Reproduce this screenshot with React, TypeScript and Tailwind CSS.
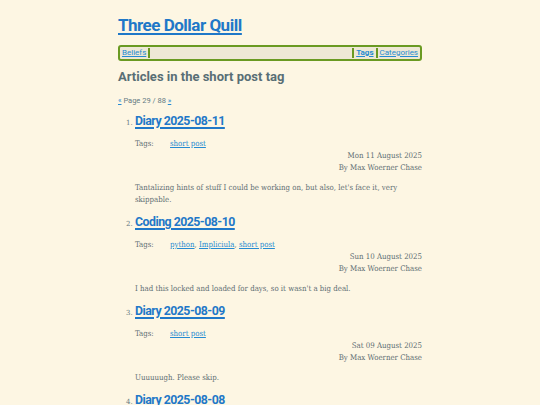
import React from 'react';

const heading = { fontFamily: '"Liberation Sans Narrow", "Roboto", sans-serif' };
const body = { fontFamily: '"DejaVu Serif", "Liberation Serif", serif' };

const posts = [
  {
    title: 'Diary 2025-08-11',
    tags: ['short post'],
    date: 'Mon 11 August 2025',
    summary: "Tantalizing hints of stuff I could be working on, but also, let's face it, very skippable.",
  },
  {
    title: 'Coding 2025-08-10',
    tags: ['python', 'Impliciula', 'short post'],
    date: 'Sun 10 August 2025',
    summary: "I had this locked and loaded for days, so it wasn't a big deal.",
  },
  {
    title: 'Diary 2025-08-09',
    tags: ['short post'],
    date: 'Sat 09 August 2025',
    summary: 'Uuuuuugh. Please skip.',
  },
  {
    title: 'Diary 2025-08-08',
    tags: ['short post'],
    date: 'Fri 08 August 2025',
    summary: 'Another one.',
  },
];

function Sep() {
  return <span className="inline-block w-[2px] h-[10px] bg-[#6a9a22] mx-[2px]" />;
}

export default function App() {
  return (
    <div className="min-h-screen bg-[#fdf6e3] text-[#5f6f73]" style={body}>
      <div className="w-[304px] mx-auto pt-[14px]">
        <h1 style={heading} className="text-[17px] leading-[22px] font-bold tracking-[-0.5px] text-[#1f78c8] underline decoration-[1.5px] underline-offset-2">
          <a href="#">Three Dollar Quill</a>
        </h1>

        {/* nav bar */}
        <nav
          style={heading}
          className="mt-[9px] h-[16px] flex items-center justify-between rounded-[3px] border-2 border-[#6a9a22] bg-[#eee8d5] px-[2px] text-[8px] leading-none"
        >
          <div className="flex items-center">
            <a href="#" className="text-[#268bd2] underline">Beliefs</a>
            <Sep />
          </div>
          <div className="flex items-center">
            <Sep />
            <a href="#" className="text-[#268bd2] font-bold underline">Tags</a>
            <Sep />
            <a href="#" className="text-[#268bd2] underline">Categories</a>
          </div>
        </nav>

        <h2 style={heading} className="mt-[8px] text-[13px] leading-[16px] font-bold text-[#586e75]">
          Articles in the short post tag
        </h2>

        <p style={heading} className="mt-[11px] text-[7.5px] leading-[10px] text-[#657b83]">
          <a href="#" className="text-[#268bd2] underline">«</a> Page 29 / 88{' '}
          <a href="#" className="text-[#268bd2] underline">»</a>
        </p>

        <ol className="mt-[2px] pl-[17px] list-decimal marker:text-[7px] marker:text-[#657b83]">
          {posts.map((p) => (
            <li key={p.title} className="mb-[3px]">
              <a
                href="#"
                style={heading}
                className="text-[12.3px] leading-[18px] font-bold tracking-[-0.5px] text-[#1f78c8] underline decoration-[1.5px] underline-offset-2"
              >
                {p.title}
              </a>
              <div className="mt-[6px] text-[7.8px] leading-[12px] font-stretch-condensed">
                <div className="flex">
                  <span className="w-[35px]">Tags:</span>
                  <span>
                    {p.tags.map((t, i) => (
                      <React.Fragment key={t}>
                        <a href="#" className="text-[#268bd2] underline">{t}</a>
                        {i < p.tags.length - 1 ? ', ' : ''}
                      </React.Fragment>
                    ))}
                  </span>
                </div>
                <div className="text-right">{p.date}</div>
                <div className="text-right">By Max Woerner Chase</div>
                <p className="mt-[8px]">{p.summary}</p>
              </div>
            </li>
          ))}
        </ol>
      </div>
    </div>
  );
}
